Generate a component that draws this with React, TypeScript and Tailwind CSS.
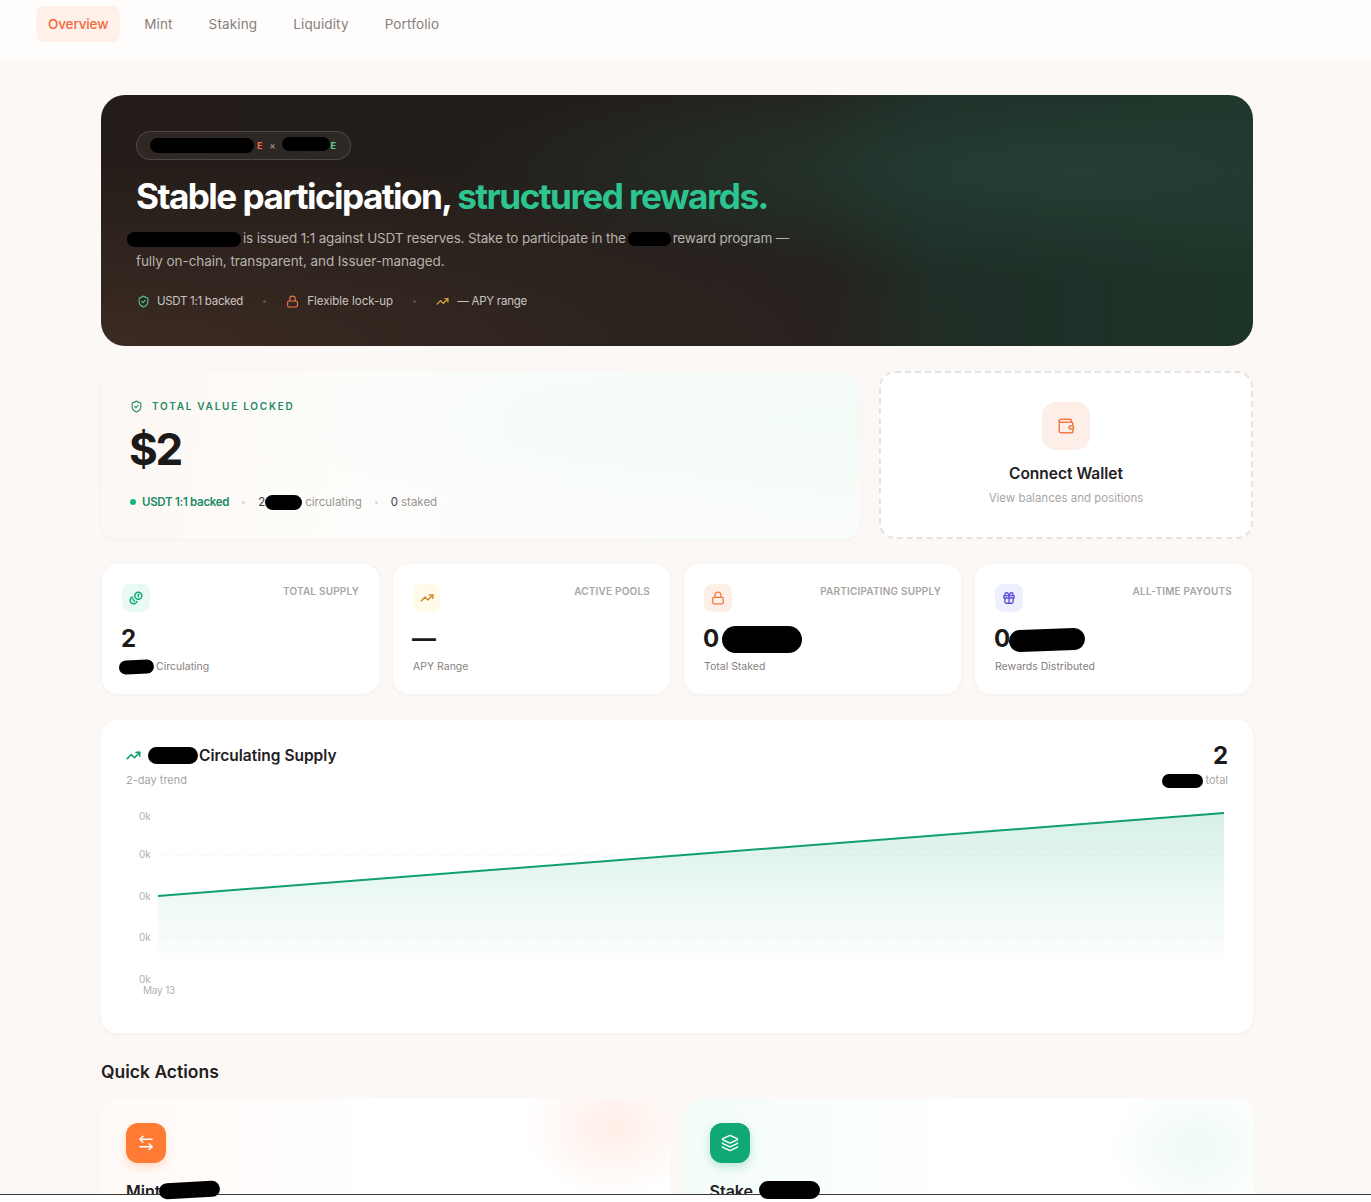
import { ArrowLeftRight, Coins, Gift, Layers, Lock, ShieldCheck, TrendingUp, Wallet } from "lucide-react";
import clsx from "clsx";
import type { ReactNode } from "react";

const NAV = ["Overview", "Mint", "Staking", "Liquidity", "Portfolio"];

// black marker strokes that hide names in the reference
function Blob({ className }: { className: string }) {
  return <span className={clsx("inline-block bg-black rounded-full align-middle", className)} />;
}

function Dot({ className }: { className: string }) {
  return <span className={clsx("size-[3px] rounded-full", className)} />;
}

type Stat = {
  label: string;
  value: ReactNode;
  caption: ReactNode;
  icon: ReactNode;
  iconBg: string;
};

const STATS: Stat[] = [
  {
    label: "TOTAL SUPPLY",
    value: "2",
    caption: (
      <>
        <Blob className="w-[35px] h-[14px] -ml-[3px] mr-[2px] -rotate-3" />
        Circulating
      </>
    ),
    icon: <Coins strokeWidth={2.5} className="size-[14px] -scale-x-100 text-[#10a874]" />,
    iconBg: "bg-[#e8faf3] w-[28px]",
  },
  {
    label: "ACTIVE POOLS",
    value: "—",
    caption: "APY Range",
    icon: <TrendingUp strokeWidth={2.5} className="size-[14px] text-[#d98a2b]" />,
    iconBg: "bg-[#fffaea] w-[27px]",
  },
  {
    label: "PARTICIPATING SUPPLY",
    value: (
      <>
        0<Blob className="w-[80px] h-[27px] ml-[3px] -mt-[2px]" />
      </>
    ),
    caption: "Total Staked",
    icon: <Lock strokeWidth={2.25} className="size-[14px] text-[#f47a45]" />,
    iconBg: "bg-[#fdeee8] w-[28px]",
  },
  {
    label: "ALL-TIME PAYOUTS",
    value: (
      <>
        0<Blob className="w-[76px] h-[22px] -ml-[1px] -mt-[1px] -rotate-2" />
      </>
    ),
    caption: "Rewards Distributed",
    icon: <Gift strokeWidth={2.25} className="size-[14px] text-[#5b4fd8]" />,
    iconBg: "bg-[#eef0ff] w-[28px]",
  },
];

function StatCard({ stat }: { stat: Stat }) {
  return (
    <div className="h-[130px] rounded-2xl bg-white px-5 pt-5 shadow-[0_1px_4px_rgba(120,90,70,0.06)]">
      <div className="flex items-start justify-between">
        <div className={clsx("h-[28px] rounded-lg flex items-center justify-center", stat.iconBg)}>
          {stat.icon}
        </div>
        <span className="text-[10px] leading-[15px] font-semibold tracking-[0.02em] text-[#a9a5a3]">
          {stat.label}
        </span>
      </div>
      <div className="mt-[12px] h-[29px] -ml-px text-[24px] leading-[29px] font-bold text-[#1c1a19] whitespace-nowrap">
        {stat.value}
      </div>
      <div className="mt-[6px] h-[16px] text-[10.5px] leading-[16px] text-[#86817e]">{stat.caption}</div>
    </div>
  );
}

function SupplyChart() {
  return (
    <svg viewBox="0 0 1152 230" className="mt-[4px] block w-[1152px] h-[230px] -ml-[25px]">
      <defs>
        <linearGradient id="area" x1="0" y1="0" x2="0" y2="1">
          <stop offset="0" stopColor="#10a874" stopOpacity="0.17" />
          <stop offset="0.7" stopColor="#10a874" stopOpacity="0.05" />
          <stop offset="1" stopColor="#10a874" stopOpacity="0" />
        </linearGradient>
      </defs>
      <line x1="57" y1="63" x2="1123" y2="63" stroke="#f4f2f1" strokeDasharray="3 3" />
      <line x1="57" y1="146" x2="1123" y2="146" stroke="#f4f2f1" strokeDasharray="3 3" />
      <path d="M57 104 L1123 21 L1123 176 L57 176 Z" fill="url(#area)" />
      <path d="M57 104 L1123 21" fill="none" stroke="#10a06f" strokeWidth="2" />
      <g fontSize="10" fill="#b3afad">
        <text x="38" y="28">0k</text>
        <text x="38" y="66">0k</text>
        <text x="38" y="108">0k</text>
        <text x="38" y="149">0k</text>
        <text x="38" y="191">0k</text>
        <text x="42" y="202" letterSpacing="-0.2">May 13</text>
      </g>
    </svg>
  );
}

export default function App() {
  return (
    <div className="relative h-[1202px] overflow-hidden bg-white font-['Inter','Liberation_Sans',sans-serif]">
      <div className="h-[1195px] overflow-hidden border-b border-[#3a3a3a] bg-[#fcf8f5]">
        {/* Nav */}
        <header className="h-[62px] bg-[#fffdfc] pl-9 pt-[6px]">
          <nav className="flex gap-3">
            {NAV.map((item, i) => (
              <span
                key={item}
                className={clsx(
                  "h-9 px-3 rounded-lg flex items-center text-[13.5px]",
                  i === 0
                    ? "bg-[#fff0ea] text-[#f4693a] font-medium tracking-[-0.01em]"
                    : "text-[#85807d] tracking-[0.01em]"
                )}
              >
                {item}
              </span>
            ))}
          </nav>
        </header>

        <main className="w-[1152px] ml-[101px] pt-[33px]">
          {/* Hero */}
          <section className="h-[251px] rounded-[24px] px-[35px] pt-9 bg-[radial-gradient(ellipse_at_0%_100%,#3b2b23_0%,transparent_55%),radial-gradient(ellipse_at_85%_30%,#243e33_0%,transparent_45%),linear-gradient(90deg,#231c18_0%,#231f1c_62%,#1f2d26_72%,#1d3429_100%)]">
            <div className="h-[29px] w-[215px] rounded-full border border-white/15 bg-white/5 flex items-center pl-[13px] text-[9px] font-bold tracking-[0.1em]">
              <Blob className="w-[104px] h-[15px]" />
              <span className="text-[#f4693a] ml-[3px]">E</span>
              <span className="text-[#8a8580] mx-[6px]">×</span>
              <Blob className="w-[48px] h-[14px] -mt-[3px]" />
              <span className="text-[#5fcf9f]">E</span>
            </div>
            <h1 className="mt-[14px] text-[35.2px] leading-[44px] font-bold tracking-[-0.045em] text-white whitespace-nowrap">
              Stable participation, <span className="text-[#2cc48f]">structured rewards.</span>
            </h1>
            <p className="mt-[9px] w-[680px] text-[13.5px] tracking-[-0.005em] leading-[23px] text-[#b7b2ae]">
              <span className="whitespace-nowrap tracking-[-0.014em]">
                <Blob className="w-[114px] h-[15px] -ml-[9px] mr-[2px]" />
                is issued 1:1 against USDT reserves. Stake to participate in the
                <Blob className="w-[43px] h-[14px] mx-[2px]" />
                reward program —
              </span>
              <br />
              fully on-chain, transparent, and Issuer-managed.
            </p>
            <div className="mt-[20px] flex items-center text-[11.5px] text-[#c9c5c1]">
              <ShieldCheck className="size-[13px] text-[#4ecb94] ml-px mr-[7px]" />
              <span className="tracking-[-0.025em]">USDT 1:1 backed</span>
              <Dot className="bg-white/20 mx-[20px]" />
              <Lock className="size-[13px] text-[#f47a45] mr-[8px]" />
              Flexible lock-up
              <Dot className="bg-white/20 mx-[20px]" />
              <TrendingUp className="size-[13px] text-[#f3b93f] mr-[8px]" />
              <span className="tracking-[-0.02em]">— APY range</span>
            </div>
          </section>

          {/* TVL + wallet */}
          <div className="mt-[25px] grid grid-cols-[759px_374px] gap-[19px]">
            <section className="h-[168px] rounded-2xl px-[29px] pt-[28px] bg-[radial-gradient(ellipse_at_100%_30%,#f3fbf7_0%,transparent_60%),linear-gradient(100deg,#fdf7f3_0%,#fdfdfb_35%,#f9fcfa_100%)] shadow-[0_1px_4px_rgba(120,90,70,0.05)]">
              <div className="flex items-center gap-[9px] text-[10px] leading-[14px] font-semibold tracking-[0.175em] text-[#1f8a66]">
                <ShieldCheck className="size-[13px]" />
                TOTAL VALUE LOCKED
              </div>
              <div className="mt-[8px] -ml-px text-[44px] leading-[56px] font-bold tracking-[-0.05em] text-[#1c1a19]">$2</div>
              <div className="mt-[17px] flex items-center text-[11.5px] leading-[16px] text-[#9a9592]">
                <span className="size-[6px] rounded-full bg-[#10b981] mr-[6px]" />
                <span className="font-semibold tracking-[-0.025em] text-[#1c8a67]">USDT 1:1 backed</span>
                <Dot className="bg-[#dcd8d5] mx-[13px]" />
                <span className="text-[#45413e]">2</span>
                <Blob className="w-[37px] h-[15px] mr-[3px]" />
                circulating
                <Dot className="bg-[#dcd8d5] mx-[13px]" />
                <span className="text-[#45413e] mr-[3px]">0</span> staked
              </div>
            </section>

            <section className="h-[168px] rounded-2xl bg-white border-2 border-dashed border-[#e6e2e0] flex flex-col items-center pt-[29px]">
              <div className="size-12 rounded-[14px] bg-[#fdeee8] flex items-center justify-center">
                <Wallet className="size-[18px] text-[#f47a45]" />
              </div>
              <div className="mt-[13px] text-[15.5px] leading-[22px] font-semibold text-[#22201f]">Connect Wallet</div>
              <div className="mt-[4px] text-[11.5px] leading-[18px] text-[#aaa6a4]">View balances and positions</div>
            </section>
          </div>

          {/* Stat cards */}
          <div className="mt-[25px] mx-px grid grid-cols-4 gap-[14px]">
            {STATS.map((stat) => (
              <StatCard key={stat.label} stat={stat} />
            ))}
          </div>

          {/* Chart */}
          <section className="mt-[26px] h-[313px] rounded-2xl bg-white px-[25px] pt-[23px] shadow-[0_1px_4px_rgba(120,90,70,0.06)]">
            <div className="flex items-start justify-between">
              <div>
                <div className="flex items-center h-6 pt-px text-[15.5px] font-semibold text-[#22201f]">
                  <TrendingUp strokeWidth={2.5} className="size-[15px] text-[#10a06f] mr-[7px]" />
                  <Blob className="w-[50px] h-[17px] mr-px" />
                  Circulating Supply
                </div>
                <div className="mt-[5px] text-[11px] leading-[16px] text-[#a9a5a3]">2-day trend</div>
              </div>
              <div className="text-right">
                <div className="h-6 pt-px text-[24px] leading-6 font-bold text-[#1c1a19]">2</div>
                <div className="mt-[5px] text-[11px] leading-[16px] text-[#a9a5a3]">
                  <Blob className="w-[41px] h-[14px] mr-[2px]" />
                  total
                </div>
              </div>
            </div>
            <SupplyChart />
          </section>

          {/* Quick actions */}
          <h2 className="mt-[27px] text-[17.5px] leading-[24px] font-semibold text-[#22201f]">Quick Actions</h2>
          <div className="mt-[15px] grid grid-cols-2 gap-[15px]">
            <section className="h-[140px] rounded-2xl px-[25px] pt-6 bg-[radial-gradient(ellipse_90px_70px_at_90%_20%,#ffeee7_0%,transparent_100%),linear-gradient(90deg,#fffaf7,#ffffff_50%)]">
              <div className="size-10 rounded-xl bg-[#ff7a33] flex items-center justify-center shadow-[0_4px_10px_rgba(255,122,51,0.25)]">
                <ArrowLeftRight className="size-[18px] text-white" />
              </div>
              <div className="mt-[16px] text-[16px] leading-6 font-semibold text-[#22201f]">Mint</div>
            </section>
            <section className="h-[140px] rounded-2xl px-[25px] pt-6 bg-[radial-gradient(ellipse_90px_70px_at_90%_35%,#eefaf4_0%,transparent_100%),linear-gradient(90deg,#f3fcf8,#ffffff_50%)]">
              <div className="size-10 rounded-xl bg-[#10a874] flex items-center justify-center shadow-[0_4px_10px_rgba(16,168,116,0.25)]">
                <Layers className="size-[18px] text-white" />
              </div>
              <div className="mt-[16px] text-[16px] leading-6 font-semibold text-[#22201f]">Stake</div>
            </section>
          </div>
        </main>
      </div>

      {/* marker strokes that run past the bottom rule */}
      <span className="absolute left-[159px] top-[1182px] w-[61px] h-[16px] rounded-full bg-black -rotate-3" />
      <span className="absolute left-[759px] top-[1181px] w-[61px] h-[18px] rounded-full bg-black" />
    </div>
  );
}
